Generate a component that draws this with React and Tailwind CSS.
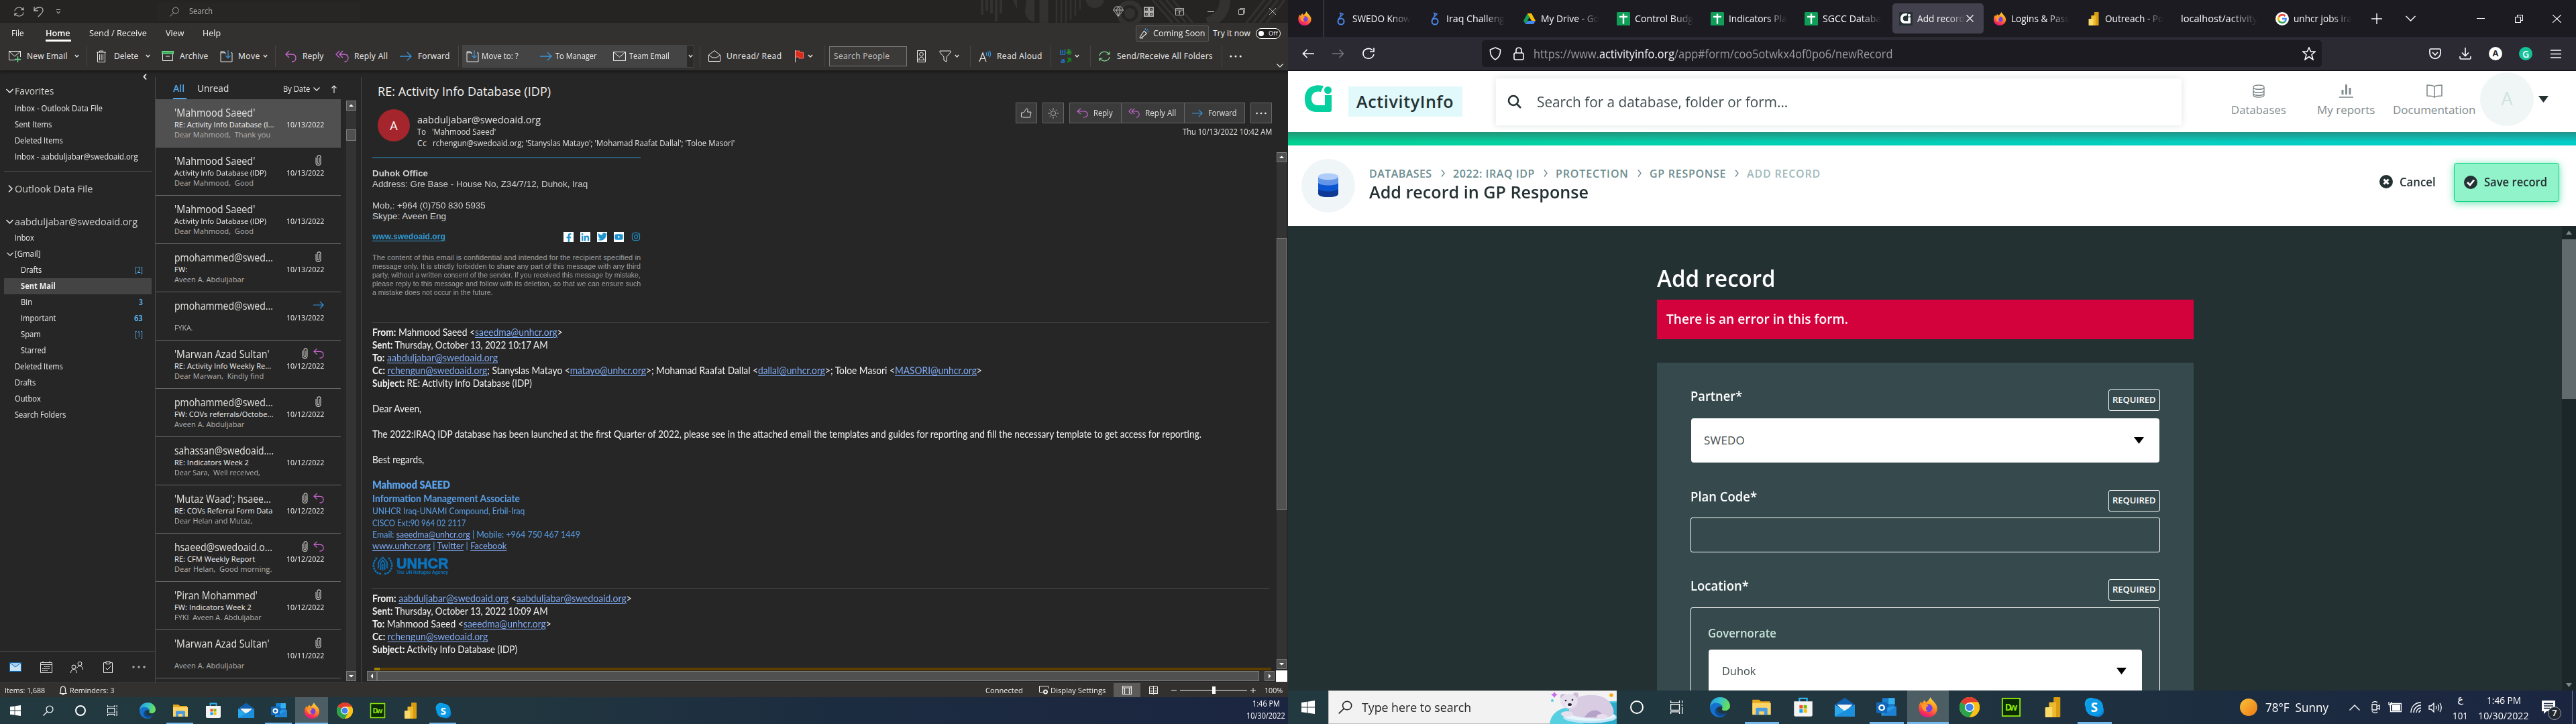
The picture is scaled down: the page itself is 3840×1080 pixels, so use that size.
import React, { useLayoutEffect, useRef, useState } from "react";
import { FaFacebookF, FaLinkedinIn, FaTwitter, FaInstagram, FaYoutube } from "react-icons/fa";

/* One line of text that fills its box: condensed when too wide, tracked out when too narrow. */
function T({ className = "", children }) {
  const box = useRef(null);
  const ink = useRef(null);
  const [fit, setFit] = useState({ spacing: 0, scale: 1 });
  useLayoutEffect(() => {
    const n = ink.current.textContent.length;
    const natural = ink.current.offsetWidth;
    const room = box.current.offsetWidth;
    if (n === 0 || natural === 0) return;
    if (natural > room) setFit({ spacing: 0, scale: room / natural });
    else setFit({ spacing: (room - natural) / n, scale: 1 });
  }, []);
  return (
    <div ref={box} className={"shrink-0 whitespace-pre " + className}>
      <span ref={ink} className="inline-block origin-left align-top" style={{ letterSpacing: fit.spacing + "px", transform: "scaleX(" + fit.scale + ")" }}>{children}</span>
    </div>
  );
}

/* Line icon on a 16 or 20 unit grid. */
function Ic({ className = "", box = "0 0 16 16", sw = 1, d, children }) {
  return (
    <svg viewBox={box} preserveAspectRatio="none" className={"shrink-0 " + className} fill="none" stroke="currentColor" strokeWidth={sw}>
      {d ? <path d={d} /> : null}
      {children}
    </svg>
  );
}

const Chev = ({ className = "" }) => <Ic className={"h-[5px] " + className} box="0 0 8 5" sw={1.4} d="M1 1L4 4L7 1" />;
const Sep = ({ className = "" }) => <div className={"h-8 w-px shrink-0 bg-[#484644] " + className} />;
const ReplyIc = ({ className = "" }) => <Ic className={"text-[#c767cf] " + className} box="0 0 17 18" sw={1.3} d="M6 1L1 6L6 11M1 6H10C14 6 16 8.500 16 11.500C16 15 13.500 17 10 17" />;
const ReplyAllIc = ({ className = "" }) => <Ic className={"text-[#c767cf] " + className} box="0 0 20 18" sw={1.3} d="M6 1L1 6L6 11M11 1L6 6L11 11M6 6H13C17 6 19 8.500 19 11.500C19 15 16.500 17 13.500 17" />;
const FwdIc = ({ className = "" }) => <Ic className={"text-[#3a96dd] " + className} box="0 0 18 14" sw={1.3} d="M0 7H17M11 1L17 7L11 13" />;
const MoveIc = ({ className = "" }) => (
  <Ic className={className} box="0 0 19 19">
    <path d="M8 4H1V18H18V4H16M1 4V2H6L8 4M8 4V6" />
    <path d="M12 0V12M8.500 8.500L12 12L15.500 8.500" stroke="#3a96dd" strokeWidth="1.300" />
  </Ic>
);
const ClipIc = ({ className = "" }) => <Ic className={className} box="0 0 9 16" sw={1.1} d="M1 4V12C1 16.500 8 16.500 8 12V3.500C8 0 3 0 3 3.500V11C3 13.500 6 13.500 6 11V4" />;
const SyncIc = ({ className = "" }) => <Ic className={className} box="0 0 18 18" sw={1.2} d="M2 8C2.500 3 9 0 14 4L16 6M16 2V6H12M16 10C15.500 15 9 18 4 14L2 12M2 16V12H6" />;
const SearchIc = ({ className = "", sw = 1.2 }) => (
  <Ic className={className} sw={sw}><circle cx="10" cy="6" r="5" /><path d="M6.500 9.500L0.500 15.500" /></Ic>
);
const Dots = ({ className = "" }) => (
  <svg viewBox="0 0 20 4" className={"shrink-0 " + className} fill="currentColor"><circle cx="2" cy="2" r="1.700" /><circle cx="10" cy="2" r="1.700" /><circle cx="18" cy="2" r="1.700" /></svg>
);

/* ------------------------------------------------ brand icons */
const Firefox = ({ className = "" }) => (
  <svg viewBox="0 0 24 24" className={className}>
    <defs><linearGradient id="ff" x1="0.700" y1="0" x2="0.300" y2="1"><stop offset="0" stopColor="#ffe13a" /><stop offset="0.450" stopColor="#ff8a1c" /><stop offset="0.850" stopColor="#f5265f" /><stop offset="1" stopColor="#d8169a" /></linearGradient></defs>
    <path d="M12 24C5 24 1 19 1 13C1 10 2 7 4 5C4 6 4.500 7 5 7.500C6 5 7.500 4 8.500 3.500C8.500 4.500 9 5.500 10 6C12.500 4.500 13.500 2.500 15 0C16 3 18 4 20 6.500C22 8.500 23 11 23 13.500C23 19.500 18 24 12 24Z" fill="url(#ff)" />
    <circle cx="12.500" cy="13" r="4.800" fill="#7542e5" />
    <path d="M4.500 8C7.500 7 11 8 12.500 10.500C9 11 8.500 15 12 16.500C8 18 4 15 4.500 8Z" fill="#ff9a2a" />
  </svg>
);
const Edge = ({ className = "" }) => (
  <svg viewBox="0 0 24 24" className={className}>
    <defs><linearGradient id="eg" x1="0" y1="0" x2="1" y2="0.300"><stop offset="0" stopColor="#2596e8" /><stop offset="0.500" stopColor="#35c1d0" /><stop offset="1" stopColor="#66e05c" /></linearGradient></defs>
    <path d="M0 12C0 5 5 0 12 0C19 0 24 5 24 10.500C24 14 21 16 18 16C15 16 14 15 14.500 13.500C16 11 13 7.500 9 8C4 8.500 0 13 0 12Z" fill="url(#eg)" />
    <path d="M0 12C1 8 5 6 9 7C13 7.500 14.500 10 14 12.500C13 10 9 11 8.500 14C8 19 13 21.500 19 20C17 23 14.500 24 12 24C5 24 0 19 0 12Z" fill="#1572cc" />
    <path d="M8.500 14C8 19 13 21.500 20.500 18.500C17 24 10 24 7 20C5 17 6 13 9.500 11.500Z" fill="#0c4a96" />
  </svg>
);
const Explorer = ({ className = "" }) => (
  <svg viewBox="0 0 24 24" className={className}><path d="M1 3H9L11 5H22V20H1Z" fill="#e8a81c" /><path d="M1 7H23V21H1Z" fill="#fdd467" /><path d="M5 21V14Q5 12.500 6.500 12.500H17.500Q19 12.500 19 14V21H15V17H9V21Z" fill="#4a9be0" /></svg>
);
const Store = ({ className = "" }) => (
  <svg viewBox="0 0 24 24" className={className}><path d="M7.500 7V1.500H16.500V7" fill="none" stroke="#30b4f0" strokeWidth="1.800" /><path d="M1 5H23V21Q23 23 21 23H3Q1 23 1 21Z" fill="#f3f3f3" /><path d="M7.500 9.500H11.500V13.500H7.500Z" fill="#f04e23" /><path d="M12.500 9.500H16.500V13.500H12.500Z" fill="#7fba00" /><path d="M7.500 14.500H11.500V18.500H7.500Z" fill="#00a4ef" /><path d="M12.500 14.500H16.500V18.500H12.500Z" fill="#ffb900" /></svg>
);
const MailApp = ({ className = "" }) => (
  <svg viewBox="0 0 24 24" className={className}><path d="M0 9L12 0.500L24 9V12H0Z" fill="#1060b0" /><path d="M3 9H21L12 18Z" fill="#f2f2f2" /><path d="M0 9L12 16L24 9V23H0Z" fill="#2aa8ea" /><path d="M3 9H21L12 16.500Z" fill="#f4f4f4" /><path d="M0 23L24 9V23Z" fill="#1c8fdc" /></svg>
);
const Outlook = ({ className = "" }) => (
  <svg viewBox="0 0 24 24" className={className}><path d="M7 1H22V15H7Z" fill="#1b7fd0" /><path d="M14.500 1H22V8H14.500Z" fill="#35b0ee" /><path d="M7 8H14.500V15H7Z" fill="#0f5ba8" /><path d="M6 13L24 11V22H6Z" fill="#2a9be6" /><path d="M24 11L6 22H24Z" fill="#1d82d4" /><rect x="0" y="6" width="13" height="13" rx="1" fill="#1066b8" /><circle cx="6.500" cy="12.500" r="3" fill="none" stroke="#fff" strokeWidth="1.900" /></svg>
);
const Chrome = ({ className = "" }) => (
  <svg viewBox="0 0 24 24" className={className}><circle cx="12" cy="12" r="12" fill="#fbc116" /><path d="M12 12L1.600 6A12 12 0 0 1 22.400 6H12Z" fill="#e33b2e" /><path d="M1.600 6A12 12 0 0 0 12 24L17.200 15L12 12Z" fill="#2ba24c" /><path d="M12 6H22.400A12 12 0 0 1 12 24L17.200 15Z" fill="#fbc116" /><circle cx="12" cy="12" r="5.700" fill="#fff" /><circle cx="12" cy="12" r="4.500" fill="#3f82ee" /></svg>
);
const Dw = ({ className = "" }) => (
  <svg viewBox="0 0 24 24" className={className}><rect x="1.500" y="1.500" width="21" height="21" fill="#0b2b05" stroke="#8ee80a" strokeWidth="1.500" /><text x="12" y="16" textAnchor="middle" fontFamily="Open Sans, sans-serif" fontWeight="700" fontSize="11" textLength="15" fill="#8ee80a">Dw</text></svg>
);
const PowerBI = ({ className = "" }) => (
  <svg viewBox="0 0 24 24" className={className}><rect x="13" y="0" width="8" height="24" rx="1" fill="#d99b0f" /><rect x="7.500" y="6" width="8.500" height="18" rx="1" fill="#edb92e" /><rect x="3" y="12" width="8.500" height="12" rx="1" fill="#fadb6a" /></svg>
);
const Skype = ({ className = "" }) => (
  <svg viewBox="0 0 24 24" className={className}><circle cx="8" cy="8" r="7.500" fill="#0fa5ea" /><circle cx="16" cy="16" r="7.500" fill="#0a84d6" /><circle cx="12" cy="12" r="10.500" fill="#0c9be6" /><text x="12" y="17.500" textAnchor="middle" fontFamily="Open Sans, sans-serif" fontWeight="700" fontSize="15" fill="#fff">S</text></svg>
);
const APPS = [
  { I: Edge }, { I: Explorer, on: true }, { I: Store }, { I: MailApp }, { I: Outlook, on: true },
  { I: Firefox, focus: true }, { I: Chrome }, { I: Dw }, { I: PowerBI }, { I: Skype, on: true },
];
const WinIc = ({ className = "" }) => (
  <svg viewBox="0 0 16 16" className={"shrink-0 " + className} fill="#fff"><path d="M0 2.300L6.600 1.400V7.600H0ZM7.400 1.300L16 0V7.600H7.400ZM0 8.400H6.600V14.600L0 13.700ZM7.400 8.400H16V16L7.400 14.700Z" /></svg>
);
const TaskViewIc = ({ className = "" }) => (
  <Ic className={"text-white " + className} box="0 0 17 16" sw={1.1} d="M0.500 0V2.500H11.500V0M0.500 4.500H11.500V11.500H0.500ZM0.500 16V13.500H11.500V16M15 0V3M15 8V16M14 5.500H16" />
);

/* ------------------------------------------------ Outlook: chrome */
function TitleBar() {
  return (
    <div className="relative flex h-[34px] items-center bg-[#252423] text-[#b8b6b4]">
      <svg viewBox="0 0 460 34" className="absolute right-0 top-0 h-[34px] w-[460px]" fill="none" stroke="#333231">
        <path d="M4 0V22M11 0V16M18 0V20M25 0V32M32 0V20" strokeWidth="4" />
        <path d="M50 0L56 14V0Z" fill="#333231" stroke="none" />
        <path d="M70 0H82V34C74 30 68 26 68 16Z" fill="#333231" stroke="none" />
        <path d="M96 0V34" strokeWidth="13" />
        <path d="M115 0V34M122 0V34M129 0V34M136 0V30M143 0V24M150 0V14" strokeWidth="2.500" />
        <circle cx="172" cy="-2" r="14" fill="#333231" stroke="none" />
        <circle cx="224" cy="20" r="8" fill="#333231" stroke="none" />
        <circle cx="224" cy="20" r="16" strokeWidth="7" />
        <path d="M258 0L288 34M268 0L298 34M278 0L308 34M288 0L318 34" strokeWidth="3" />
        <path d="M366 0C366 18 356 28 340 34" strokeWidth="16" />
        <path d="M398 34L425 0M408 34L435 0M418 34L445 0M428 34L455 0" strokeWidth="3" />
      </svg>
      <SyncIc className="ml-5 h-[17px] w-[17px]" />
      <Ic className="ml-[13px] h-[17px] w-[15px]" box="0 0 15 17" sw={1.3} d="M1 1V7H7M1 7C4 1 13 0 14 6C14.500 10 9 13 7 16" />
      <Ic className="ml-[18px] h-[7px] w-2" box="0 0 8 7" sw={1.1} d="M1 0.500H7M1.500 3L4 6L6.500 3" />
      <div className="ml-[143px] flex h-[27px] w-[303px] shrink-0 items-center bg-[#272625]">
        <SearchIc className="ml-[19px] h-[15px] w-[14px]" sw={1} />
        <T className="ml-[15px] w-[35px] text-[12px]">Search</T>
      </div>
      <Ic className="relative ml-[1122px] h-4 w-4" d="M4 1H12L15.500 6L8 15.500L0.500 6ZM0.500 6H15.500M8 1L5 6L8 15L11 6L8 1" />
      <Ic className="relative ml-[30px] h-[15px] w-[15px]" sw={1.8} box="0 0 16 16" d="M1 1H7V7H1ZM9 1H15V7H9ZM1 9H7V15H1ZM9 9H15V15H9ZM3 4H5M11 4H13M3 12H5M11 12H13" />
      <Ic className="relative ml-8 h-[11px] w-[13px]" box="0 0 13 11" d="M0.500 0.500H12.500V10.500H0.500ZM0.500 3H12.500M6.500 9.500V4.500M4.500 6.500L6.500 4.500L8.500 6.500" />
      <div className="relative ml-[35px] h-px w-[10px] bg-[#c8c6c4]" />
      <Ic className="relative ml-9 h-[10px] w-[10px]" box="0 0 10 10" d="M0.500 2.500H7.500V9.500H0.500ZM2.500 2.500V0.500H9.500V7.500H7.500" />
      <Ic className="relative ml-9 h-[10px] w-[10px]" box="0 0 10 10" d="M0 0L10 10M10 0L0 10" />
    </div>
  );
}

function MenuTabs() {
  return (
    <div className="flex h-[31px] items-center text-[13px] text-[#f3f2f1]">
      <T className="ml-[17px] w-[19px]">File</T>
      <div className="relative ml-8 flex h-full items-center font-semibold text-white">
        <T className="w-[37px]">Home</T>
        <div className="absolute bottom-[3px] left-0 h-[3px] w-[38px] bg-white" />
      </div>
      <T className="ml-7 w-[86px]">Send / Receive</T>
      <T className="ml-7 w-[27px]">View</T>
      <T className="ml-7 w-[27px]">Help</T>
      <div className="ml-[1364px] flex h-6 w-[109px] shrink-0 items-center rounded-xs border border-[#5a5856] bg-[#3b3a39]">
        <Ic className="ml-1 h-4 w-[15px]" sw={1.1}>
          <path d="M1 14L8 4L12 8L3 15ZM5 14V16" />
          <path d="M10 3V0M12 4L14 1M13 6L16 5" stroke="#3a96dd" />
        </Ic>
        <T className="ml-[6px] w-[77px]">Coming Soon</T>
      </div>
      <T className="ml-[6px] w-14 text-[12px]">Try it now</T>
      <div className="ml-2 flex h-4 w-[37px] shrink-0 items-center rounded-full border border-white bg-[#201f1e] text-[9px] text-white">
        <div className="ml-[3px] h-2 w-2 rounded-full bg-white" />
        <T className="ml-[7px] w-[14px]">Off</T>
      </div>
    </div>
  );
}

function Ribbon() {
  return (
    <div className="flex h-[37px] items-center text-[12px] text-[#f0efee]">
      <Ic className="ml-[13px] h-[18px] w-[18px]" box="0 0 18 18">
        <path d="M10 14.500H0.500V1.500H17.500V10M0.500 1.500L9 9L17.500 1.500" />
        <path d="M13.500 9V18M9 13.500H18" stroke="#6fdc8c" strokeWidth="1.400" />
      </Ic>
      <T className="ml-[9px] w-[61px]">New Email</T>
      <Chev className="ml-[10px] w-[7px]" />
      <Sep className="ml-[11px]" />
      <Ic className="ml-[14px] h-[18px] w-[14px]" box="0 0 14 18" d="M0 3H14M4.500 3V1H9.500V3M1.500 3V17.500H12.500V3M4.500 6V15M7 6V15M9.500 6V15" />
      <T className="ml-3 w-9">Delete</T>
      <Chev className="ml-[11px] w-[7px]" />
      <Ic className="ml-[17px] h-[15px] w-[18px]" box="0 0 18 15">
        <path d="M1.500 4V14.500H16.500V4M6 8H12" />
        <rect x="0.500" y="0.500" width="17" height="3.500" fill="#3fae5a" stroke="#6fdc8c" />
      </Ic>
      <T className="ml-[9px] w-[42px]">Archive</T>
      <MoveIc className="ml-[18px] h-[18px] w-[19px]" />
      <T className="ml-2 w-[33px]">Move</T>
      <Chev className="ml-1 w-[7px]" />
      <Sep className="ml-[11px]" />
      <ReplyIc className="ml-[14px] h-[18px] w-[17px]" />
      <T className="ml-[9px] w-8">Reply</T>
      <ReplyAllIc className="ml-[17px] h-[18px] w-5" />
      <T className="ml-2 w-[50px]">Reply All</T>
      <FwdIc className="ml-[18px] h-[14px] w-[18px]" />
      <T className="ml-[9px] w-12">Forward</T>
      <Sep className="ml-3" />
      <div className="ml-[5px] flex h-[34px] w-[334px] shrink-0 items-center bg-[#444444]">
        <MoveIc className="ml-[6px] h-[18px] w-[19px]" />
        <T className="ml-1 w-[55px]">Move to: ?</T>
        <FwdIc className="ml-8 h-[14px] w-[18px]" />
        <T className="ml-[5px] w-[62px]">To Manager</T>
        <Ic className="ml-6 h-[14px] w-[19px]" box="0 0 19 14" d="M0.500 0.500H18.500V13.500H0.500ZM0.500 0.500L9.500 8L18.500 0.500" />
        <T className="ml-[5px] w-[60px]">Team Email</T>
      </div>
      <div className="flex h-[34px] w-3 shrink-0 items-center justify-center border border-[#444444] bg-[#2b2a29]"><Chev className="w-[7px]" /></div>
      <Sep className="ml-2" />
      <Ic className="ml-3 h-[17px] w-[18px]" box="0 0 18 17" d="M0.500 7V16.500H17.500V7L9 0.500ZM0.500 7L6 11H12L17.500 7" />
      <T className="ml-[9px] w-[82px]">Unread/ Read</T>
      <svg viewBox="0 0 13 18" className="ml-5 h-[18px] w-[13px] shrink-0"><path d="M0.500 0V18" stroke="#d8d6d4" /><path d="M1 1H7V3H12.500V12H6V10H1Z" fill="#d92b1c" stroke="#ff6a5c" /></svg>
      <Chev className="ml-[6px] w-2" />
      <Sep className="ml-4" />
      <div className="ml-[7px] flex h-[30px] w-[116px] shrink-0 items-center border border-[#7d7b79] bg-[#3b3a39] text-[#c8c6c4]">
        <T className="ml-[6px] w-[83px]">Search People</T>
      </div>
      <Ic className="ml-[15px] h-[18px] w-[13px]" box="0 0 13 18"><path d="M0.500 0.500H12.500V14.500H0.500ZM0.500 14.500V17.500H12.500V14.500M3 14C3 9 10 9 10 14" /><circle cx="6.500" cy="6" r="2.800" /></Ic>
      <Ic className="ml-5 h-[18px] w-[18px]" box="0 0 18 18" d="M1 1H17V3L11 10V17L7 15V10L1 3Z" />
      <Chev className="ml-[5px] w-[7px]" />
      <Sep className="ml-4" />
      <Ic className="ml-3 h-[18px] w-[18px]" box="0 0 18 18" sw={1.2}><path d="M1 17L6 4L11 17M3 12.500H9" /><path d="M11 3C12 5 12 6 11 8M13.500 2C15 4.500 15 7 13.500 9M16 0.500C18 4 18 7.500 16 10.500" stroke="#3a96dd" /></Ic>
      <T className="ml-[9px] w-[68px]">Read Aloud</T>
      <Sep className="ml-3" />
      <div className="ml-[13px] grid h-[24px] w-[18px] shrink-0 grid-cols-2 grid-rows-2 items-center justify-items-center text-[11px] font-bold leading-[12px]">
        <svg viewBox="0 0 9 9" className="h-[9px] w-[9px]"><path d="M1 1V8H8M4 2V6M7.500 1V7" stroke="#1e78d0" strokeWidth="1.600" fill="none" /></svg>
        <span className="font-['Noto_Sans_CJK_JP',sans-serif] text-[9px] text-[#23a02a]">あ</span>
        <span className="text-[#1e78d0]">a</span>
        <svg viewBox="0 0 9 9" className="h-[9px] w-[9px]"><path d="M1 1H8V8L5.500 6L2 9V6L4 4Z" fill="#17801c" /></svg>
      </div>
      <Chev className="ml-1 w-[7px]" />
      <Sep className="ml-4" />
      <SyncIc className="ml-[11px] h-[18px] w-[19px] text-[#7fd892]" />
      <T className="ml-[9px] w-[143px]">Send/Receive All Folders</T>
      <Sep className="ml-[13px]" />
      <Dots className="ml-[11px] h-[4px] w-[18px]" />
      <Ic className="mb-[1px] ml-[52px] h-[6px] w-[10px] self-end" box="0 0 10 6" sw={1.2} d="M0.500 0.500L5 5L9.500 0.500" />
    </div>
  );
}

/* ------------------------------------------------ Outlook: folders */
const FAVORITES = [
  ["Inbox - Outlook Data File", "w-[131px]"],
  ["Sent Items", "w-[55px]"],
  ["Deleted Items", "w-[72px]"],
  ["Inbox - aabduljabar@swedoaid.org", "w-[184px]"],
];
const GMAIL = [
  ["Drafts", "w-[31px]", "[2]", "w-[12px]"],
  ["Sent Mail", "w-[52px]"],
  ["Bin", "w-[17px]", "3", "w-[6px] font-bold"],
  ["Important", "w-[53px]", "63", "w-[13px] font-bold"],
  ["Spam", "w-[30px]", "[1]", "w-[12px]"],
  ["Starred", "w-[37px]"],
];
const REST = [["Deleted Items", "w-[72px]"], ["Drafts", "w-[31px]"], ["Outbox", "w-[39px]"], ["Search Folders", "w-[76px]"]];
const FOLDER_ROW = "flex h-6 items-center";

function Folders() {
  return (
    <div className="flex w-[231px] shrink-0 flex-col text-[12px] text-[#f0efee]">
      <div className="flex h-[18px] items-center justify-end pr-3"><Ic className="mt-[1px] h-[9px] w-[6px]" box="0 0 6 9" sw={1.8} d="M5 0.500L1.500 4.500L5 8.500" /></div>
      <div className={FOLDER_ROW}>
        <Ic className="ml-[9px] h-[7px] w-[11px]" box="0 0 11 7" sw={1.5} d="M0.500 1L5.500 6L10.500 1" />
        <T className="ml-[2px] w-[58px] text-[15px] text-[#d6d4d2]">Favorites</T>
      </div>
      <div className="mt-[3px] pl-[22px]">
        {FAVORITES.map(([t, w]) => <div key={t} className={FOLDER_ROW}><T className={w}>{t}</T></div>)}
      </div>
      <div className="ml-[6px] mt-[9px] h-px w-[220px] bg-[#4a4a4a]" />
      <div className="mt-[12px] flex h-[26px] items-center">
        <Ic className="ml-[12px] h-[11px] w-[7px]" box="0 0 7 11" sw={1.5} d="M1 0.500L6 5.500L1 10.500" />
        <T className="ml-[3px] w-[116px] text-[15px] text-[#d6d4d2]">Outlook Data File</T>
      </div>
      <div className="mt-6 flex h-[25px] items-center">
        <Ic className="ml-[9px] h-[7px] w-[11px]" box="0 0 11 7" sw={1.5} d="M0.500 1L5.500 6L10.500 1" />
        <T className="ml-[2px] w-[183px] text-[15px] text-[#d6d4d2]">aabduljabar@swedoaid.org</T>
      </div>
      <div className={FOLDER_ROW}><T className="ml-[22px] w-[29px]">Inbox</T></div>
      <div className={FOLDER_ROW}>
        <Ic className="ml-[10px] h-[6px] w-[10px]" box="0 0 11 7" sw={1.5} d="M0.500 1L5.500 6L10.500 1" />
        <T className="ml-[2px] w-[38px]">[Gmail]</T>
      </div>
      {GMAIL.map(([t, w, n, nw]) => (
        <div key={t} className={"ml-[6px] flex h-6 w-[220px] items-center justify-between pl-[25px] pr-[13px] " + (t === "Sent Mail" ? "bg-[#444444] font-bold" : "")}>
          <T className={w}>{t}</T>
          {n ? <T className={"text-[#57aef0] " + nw}>{n}</T> : null}
        </div>
      ))}
      <div className="flex-1 pl-[22px]">
        {REST.map(([t, w]) => <div key={t} className={FOLDER_ROW}><T className={w}>{t}</T></div>)}
      </div>
      <div className="flex h-[47px] items-center border-t border-[#4a4a4a]">
        <svg viewBox="0 0 18 14" className="ml-[14px] h-[14px] w-[18px]"><rect x="0.500" y="0.500" width="17" height="13" fill="#c7e0f4" stroke="#0a6cc0" /><path d="M1 1L9 7L17 1" fill="#a8cdec" stroke="#0a6cc0" /></svg>
        <Ic className="ml-[28px] h-[18px] w-[18px]" box="0 0 18 18" d="M0.500 2.500H17.500V17.500H0.500ZM0.500 5.500H17.500M4 0.500V2.500M14 0.500V2.500M3 14.500H5M6 14.500H8M9 14.500H11M3 11.500H5M6 11.500H8M9 11.500H11M12 11.500H14M6 8.500H8M9 8.500H11M12 8.500H14" />
        <Ic className="ml-[27px] h-[18px] w-[19px]" box="0 0 19 18"><circle cx="5" cy="9" r="3" /><circle cx="14" cy="4" r="3" /><path d="M0.500 18C0.500 10.500 9.500 10.500 9.500 18M9.500 11C11 6 18.500 6 18.500 13" /></Ic>
        <Ic className="ml-[30px] h-[18px] w-[14px]" box="0 0 14 18" d="M4 2.500H0.500V17.500H13.500V2.500H10M4 1H10V4.500H4ZM3.500 10.500L6 13L11 8" />
        <Dots className="ml-[29px] h-[4px] w-5 text-[#b0aeac]" />
      </div>
    </div>
  );
}

/* ------------------------------------------------ Outlook: messages */
const MESSAGES = [
  ["'Mahmood Saeed'", "w-[120px]", "RE: Activity Info Database (I...", "w-[148px]", "Dear Mahmood,  Thank you", "w-[143px]", "10/13/2022", ""],
  ["'Mahmood Saeed'", "w-[120px]", "Activity Info Database (IDP)", "w-[137px]", "Dear Mahmood,  Good", "w-[118px]", "10/13/2022", "c"],
  ["'Mahmood Saeed'", "w-[120px]", "Activity Info Database (IDP)", "w-[137px]", "Dear Mahmood,  Good", "w-[118px]", "10/13/2022", ""],
  ["pmohammed@swed...", "w-[147px]", "FW:", "w-[20px]", "Aveen A. Abduljabar", "w-[104px]", "10/13/2022", "c"],
  ["pmohammed@swed...", "w-[147px]", "", "w-[20px]", "FYKA.", "w-[27px]", "10/13/2022", "f"],
  ["'Marwan Azad Sultan'", "w-[142px]", "RE: Activity Info Weekly Re...", "w-[144px]", "Dear Marwan,  Kindly find", "w-[133px]", "10/12/2022", "cr"],
  ["pmohammed@swed...", "w-[147px]", "FW: COVs referrals/Octobe...", "w-[147px]", "Aveen A. Abduljabar", "w-[104px]", "10/12/2022", "c"],
  ["sahassan@swedoaid....", "w-[148px]", "RE: Indicators Week 2", "w-[111px]", "Dear Sara,  Well received,", "w-[128px]", "10/12/2022", ""],
  ["'Mutaz Waad'; hsaee...", "w-[144px]", "RE: COVs Referral Form Data", "w-[146px]", "Dear Helan and Mutaz,", "w-[117px]", "10/12/2022", "cr"],
  ["hsaeed@swedoaid.o...", "w-[146px]", "RE: CFM Weekly Report", "w-[120px]", "Dear Helan,  Good morning.", "w-[145px]", "10/12/2022", "cr"],
  ["'Piran Mohammed'", "w-[124px]", "FW: Indicators Week 2", "w-[115px]", "FYKI  Aveen A. Abduljabar", "w-[130px]", "10/12/2022", "c"],
  ["'Marwan Azad Sultan'", "w-[142px]", "", "w-[20px]", "Aveen A. Abduljabar", "w-[104px]", "10/11/2022", "c"],
];

const ScrollBtn = ({ d, className = "" }) => (
  <div className={"flex h-[15px] w-[15px] shrink-0 items-center justify-center border border-[#7a7a7a] bg-[#505050] " + className}>
    <svg viewBox="0 0 7 7" className="h-[7px] w-[7px]" fill="#fff"><path d={d} /></svg>
  </div>
);
const UP = "M0 5L3.500 1.500L7 5Z";
const DOWN = "M0 2L3.500 5.500L7 2Z";

function MessageList() {
  return (
    <div className="flex w-[306px] shrink-0 flex-col">
      <div className="relative flex h-[43px] items-center pt-[9px] text-[#e6e4e2]">
        <T className="ml-[26px] w-[17px] text-[15px] font-semibold text-[#4ea6ea]">All</T>
        <T className="ml-[19px] w-[47px] text-[15px]">Unread</T>
        <T className="ml-[81px] mt-[4px] w-10 text-[12px]">By Date</T>
        <Ic className="ml-[5px] mt-[4px] h-[6px] w-[10px]" box="0 0 10 6" sw={1.4} d="M0.500 0.500L5 5L9.500 0.500" />
        <Ic className="ml-[17px] mt-[3px] h-3 w-2" box="0 0 8 12" sw={1.2} d="M4 12V1M0.500 4.500L4 1L7.500 4.500" />
        <div className="absolute bottom-0 left-[26px] h-[2px] w-5 bg-[#4ea6ea]" />
      </div>
      <div className="flex">
        <div className="w-[276px]">
          {MESSAGES.map(([from, fw, sub, sw, pre, pw, date, marks], i) => (
            <div key={i} className={"flex h-[72px] justify-between border-b border-[#666666] pl-7 pr-[25px] pt-[11px] text-[11px] " + (i === 0 ? "bg-[#505050]" : "")}>
              <div>
                <div className="h-[19px] text-[15.500px] leading-[19px] text-[#e6e4e2]"><T className={fw}>{from}</T></div>
                <div className="h-[15px] leading-[15px] text-[#f3f2f1]"><T className={sw}>{sub}</T></div>
                <div className="h-[15px] leading-[15px] text-[#b4b2b0]"><T className={pw}>{pre}</T></div>
              </div>
              <div className="flex flex-col items-end">
                <div className="flex h-[19px] items-start">
                  {marks.includes("c") ? <ClipIc className={"h-4 w-[9px] text-[#c8c6c4] " + (marks === "c" ? "mr-1" : "mr-2")} /> : null}
                  {marks.includes("r") ? <ReplyIc className="h-4 w-4" /> : null}
                  {marks === "f" ? <FwdIc className="mt-[2px] h-3 w-4" /> : null}
                </div>
                <div className="h-[15px] leading-[15px] text-[#f3f2f1]"><T className="w-14">{date}</T></div>
              </div>
            </div>
          ))}
        </div>
        <div className="ml-2 mt-[2px] flex h-[866px] w-[15px] flex-col bg-[#333333]">
          <ScrollBtn d={UP} />
          <div className="mt-7 h-[17px] border border-[#7a7a7a] bg-[#505050]" />
          <ScrollBtn d={DOWN} className="mt-auto" />
        </div>
      </div>
    </div>
  );
}

/* ------------------------------------------------ Outlook: reading pane */
const L = ({ children }) => <span className="text-[#7fabf5] underline underline-offset-2">{children}</span>;
const B = ({ children }) => <b className="font-bold">{children}</b>;
const DISCLAIMER = [
  ["The content of this email is confidential and intended for the recipient specified in", "w-[400px]"],
  ["message only. It is strictly forbidden to share any part of this message with any third", "w-[400px]"],
  ["party, without a written consent of the sender. If you received this message by mistake,", "w-[400px]"],
  ["please reply to this message and follow with its deletion, so that we can ensure such", "w-[400px]"],
  ["a mistake does not occur in the future.", "w-[180px]"],
];
const HBTN = "flex h-[31px] items-center border border-[#666666] bg-[#3b3b3b]";

function ReadingPane() {
  return (
    <div className="flex flex-1 flex-col">
      <div className="ml-6 mt-[19px] flex h-6 items-center text-[18px] text-[#f0efee]"><T className="w-[258px]">RE: Activity Info Database (IDP)</T></div>
      <div className="flex h-[79px] text-[12px] text-[#e6e4e2]">
        <div className="ml-6 mt-[15px] flex h-12 w-12 items-center justify-center rounded-full bg-[#a4262c] text-[18px] text-white">A</div>
        <div className="ml-[11px] mt-5">
          <div className="h-5 text-[15px] leading-5"><T className="w-[184px]">aabduljabar@swedoaid.org</T></div>
          <div className="flex h-[18px] leading-[18px]"><T className="w-[13px]">To</T><T className="ml-[9px] w-[95px]">'Mahmood Saeed'</T></div>
          <div className="flex h-4 leading-4"><T className="w-[14px]">Cc</T><T className="ml-[9px] w-[450px]">rchengun@swedoaid.org; 'Stanyslas Matayo'; 'Mohamad Raafat Dallal'; 'Toloe Masori'</T></div>
        </div>
        <div className="ml-auto mr-6 mt-[5px] flex flex-col items-end">
          <div className="flex">
            <div className={HBTN + " w-8 justify-center"}><Ic className="h-[15px] w-4" d="M0.500 7.500H4L8 1C10 0.500 10.500 2 9.500 6.500H15L13.500 15H4.500L0.500 14.500Z" /></div>
            <div className={HBTN + " ml-2 w-8 justify-center text-[#b0aeac]"}><Ic className="h-4 w-4"><circle cx="8" cy="8" r="3.500" /><path d="M8 0V3M8 13V16M0 8H3M13 8H16M2.500 2.500L4.500 4.500M11.500 11.500L13.500 13.500M13.500 2.500L11.500 4.500M2.500 13.500L4.500 11.500" /></Ic></div>
            <div className={HBTN + " ml-2 w-[78px]"}><ReplyIc className="ml-[10px] h-[15px] w-[17px]" /><T className="ml-2 w-[29px]">Reply</T></div>
            <div className={HBTN + " -ml-px w-[95px]"}><ReplyAllIc className="ml-[10px] h-[15px] w-[17px]" /><T className="ml-2 w-[46px]">Reply All</T></div>
            <div className={HBTN + " -ml-px w-[91px]"}><FwdIc className="ml-[11px] h-3 w-4" /><T className="ml-2 w-[43px]">Forward</T></div>
            <div className={HBTN + " ml-2 w-8 justify-center"}><Dots className="h-[4px] w-4" /></div>
          </div>
          <div className="mt-1 h-[18px] leading-[18px]"><T className="w-[133px]">Thu 10/13/2022 10:42 AM</T></div>
        </div>
      </div>
      <div className="flex h-[773px]">
        <div className="flex w-[1364px] shrink-0 flex-col pl-4 font-['Lato',sans-serif] text-[14.500px] leading-[19px] text-[#f3f3f3]">
          <div className="mt-2 h-px w-[400px] shrink-0 bg-[#2e9bd6]" />
          <div className="mt-[15px] font-['Liberation_Sans',sans-serif] text-[13.500px] leading-4 text-[#d2d2d2]">
            <T className="w-[83px] font-bold">Duhok Office</T>
            <T className="w-[321px]">Address: Gre Base - House No, Z34/7/12, Duhok, Iraq</T>
            <T className="mt-4 w-[169px]">Mob,: +964 (0)750 830 5935</T>
            <T className="w-[110px]">Skype: Aveen Eng</T>
          </div>
          <div className="mt-[14px] flex h-4 w-[400px] items-center font-['Liberation_Sans',sans-serif] text-[12.500px] font-bold text-[#2e9bd6]">
            <T className="w-[109px]"><span className="underline underline-offset-2">www.swedoaid.org</span></T>
            <div className="ml-auto flex gap-[10px] text-[#1f93cf]">
              <div className="flex h-[15px] w-[15px] items-end justify-center bg-white"><FaFacebookF className="h-[13px] w-3" /></div>
              <div className="flex h-[15px] w-[15px] items-end justify-center bg-white"><FaLinkedinIn className="h-[13px] w-[13px]" /></div>
              <div className="flex h-[15px] w-[15px] items-center justify-center bg-white"><FaTwitter className="h-[14px] w-[14px]" /></div>
              <div className="flex h-[15px] w-[15px] items-center justify-center bg-white"><FaYoutube className="h-[13px] w-[13px]" /></div>
              <div className="flex h-[15px] w-[15px] items-center justify-center"><FaInstagram className="h-[14px] w-[14px]" /></div>
            </div>
          </div>
          <div className="mt-[17px] font-['Liberation_Sans',sans-serif] text-[11px] leading-[13px] text-[#a0a0a0]">
            {DISCLAIMER.map(([t, w]) => <T key={t} className={w}>{t}</T>)}
          </div>
          <div className="mt-[38px] h-px w-[1337px] shrink-0 bg-[#484848]" />
          <div className="mt-[4px]">
            <T className="w-[284px]"><B>From:</B> Mahmood Saeed &lt;<L>saeedma@unhcr.org</L>&gt;</T>
            <T className="w-[262px]"><B>Sent:</B> Thursday, October 13, 2022 10:17 AM</T>
            <T className="w-[187px]"><B>To:</B> <L>aabduljabar@swedoaid.org</L></T>
            <T className="w-[909px]"><B>Cc:</B> <L>rchengun@swedoaid.org</L>; Stanyslas Matayo &lt;<L>matayo@unhcr.org</L>&gt;; Mohamad Raafat Dallal &lt;<L>dallal@unhcr.org</L>&gt;; Toloe Masori &lt;<L>MASORI@unhcr.org</L>&gt;</T>
            <T className="w-[238px]"><B>Subject:</B> RE: Activity Info Database (IDP)</T>
            <T className="mt-[19px] w-[73px]">Dear Aveen,</T>
            <T className="mt-[19px] w-[1236px]">The 2022:IRAQ IDP database has been launched at the first Quarter of 2022, please see in the attached email the templates and guides for reporting and fill the necessary template to get access for reporting.</T>
            <T className="mt-[19px] w-[77px]">Best regards,</T>
          </div>
          <div className="mt-[19px] text-[13px] leading-[17px] text-[#5aa0e8]">
            <T className="w-[116px] text-[16px] font-extrabold leading-[18px]">Mahmood SAEED</T>
            <T className="mt-[3px] w-[220px] text-[14.500px] font-bold leading-[18px]">Information Management Associate</T>
            <T className="mt-px w-[227px]">UNHCR Iraq-UNAMI Compound, Erbil-Iraq</T>
            <T className="mt-px w-[139px]">CISCO Ext:90 964 02 2117</T>
            <T className="w-[310px]">Email: <L>saeedma@unhcr.org</L> | Mobile: +964 750 467 1449</T>
            <T className="w-[200px]"><L>www.unhcr.org</L> | <L>Twitter</L> | <L>Facebook</L></T>
          </div>
          <div className="mt-[7px] flex h-7 text-[#0b74bd]">
            <Ic className="h-7 w-[31px]" box="0 0 31 28" sw={1.8}>
              <path d="M7 2C1 8 0 16 5 22C7 25 11 26 14 26M24 2C30 8 31 16 26 22C24 25 20 26 17 26" strokeWidth="2.600" strokeDasharray="3 1" />
              <path d="M15.500 1L9 9V18M15.500 1L22 9V18M12.500 20V10L15.500 6L18.500 10V20M15.500 11V21" />
            </Ic>
            <div className="ml-[5px] font-['Liberation_Sans',sans-serif] font-bold">
              <T className="mt-px w-[77px] text-[22px] leading-[19px] [-webkit-text-stroke:0.8px_#0b74bd]">UNHCR</T>
              <T className="w-[77px] text-[7.500px] leading-[8px]">The UN Refugee Agency</T>
            </div>
          </div>
          <div className="mt-[19px] h-px w-[1337px] shrink-0 bg-[#484848]" />
          <div className="mt-[5px]">
            <T className="w-[387px]"><B>From:</B> <L>aabduljabar@swedoaid.org</L> &lt;<L>aabduljabar@swedoaid.org</L>&gt;</T>
            <T className="w-[262px]"><B>Sent:</B> Thursday, October 13, 2022 10:09 AM</T>
            <T className="w-[267px]"><B>To:</B> Mahmood Saeed &lt;<L>saeedma@unhcr.org</L>&gt;</T>
            <T className="w-[172px]"><B>Cc:</B> <L>rchengun@swedoaid.org</L></T>
            <T className="w-[216px]"><B>Subject:</B> Activity Info Database (IDP)</T>
          </div>
          <div className="mt-auto flex h-1 shrink-0 pl-[3px]">
            <div className="w-[9px] bg-[#a08400]" />
            <div className="ml-px w-[1327px] bg-[#5f3f00]" />
          </div>
        </div>
        <div className="flex h-[771px] w-[15px] flex-col bg-[#333333]">
          <ScrollBtn d={UP} />
          <div className="mt-[113px] h-[406px] border border-[#7a7a7a] bg-[#505050]" />
          <ScrollBtn d={DOWN} className="mt-auto" />
        </div>
      </div>
      <div className="flex h-[18px]">
        <div className="ml-2 mt-px flex h-[15px] w-[1353px] bg-[#333333]">
          <ScrollBtn d="M5 0L1.500 3.500L5 7Z" />
          <div className="w-[1315px] border border-[#7a7a7a] bg-[#505050]" />
          <ScrollBtn d="M2 0L5.500 3.500L2 7Z" className="ml-auto" />
        </div>
        <div className="ml-[2px] h-[17px] w-[17px] bg-white" />
      </div>
    </div>
  );
}

function StatusBar() {
  return (
    <div className="flex h-[22px] items-center border-t border-[#3f3e3d] bg-[#323130] text-[11.500px] text-[#f0efee]">
      <T className="ml-[7px] w-[60px]">Items: 1,688</T>
      <Ic className="ml-[21px] h-[14px] w-3" box="0 0 12 14" sw={1.2} d="M1 11.500H11L9.500 9V5C9.500 -0.300 2.500 -0.300 2.500 5V9L1 11.500M4.500 12C4.500 14 7.500 14 7.500 12" />
      <T className="ml-1 w-[66px]">Reminders: 3</T>
      <T className="ml-[1299px] w-14">Connected</T>
      <Ic className="ml-6 h-[13px] w-[14px]" box="0 0 14 13"><path d="M6 9.500H0.500V0.500H13.500V4" /><circle cx="9.500" cy="9" r="2.500" strokeWidth="2" /></Ic>
      <T className="ml-[3px] w-[82px]">Display Settings</T>
      <div className="ml-3 flex h-full w-10 items-center justify-center bg-[#5d5b59]"><Ic className="h-[13px] w-[14px]" box="0 0 14 13" sw={1.2} d="M0.500 0.500H13.500V12.500H0.500ZM0.500 3H13.500M3.500 3V12M10.500 3V12" /></div>
      <Ic className="ml-[13px] h-[13px] w-[13px]" box="0 0 13 13" sw={1.1} d="M6.500 1.500H0.500V11.500H6.500M6.500 1.500H12.500V11.500H6.500M6.500 0V13M2 4H5M2 6.500H5M2 9H5M8 4H11M8 6.500H11M8 9H11" />
      <div className="ml-5 h-px w-2 bg-white" />
      <div className="ml-[5px] flex h-[11px] w-[100px] items-center">
        <div className="h-px w-12 bg-white" /><div className="h-[11px] w-[5px] bg-white" /><div className="h-px flex-1 bg-white" />
      </div>
      <Ic className="ml-[5px] h-2 w-2" box="0 0 8 8" d="M0 4H8M4 0V8" />
      <T className="ml-[13px] w-[27px]">100%</T>
    </div>
  );
}

function LeftTaskbar() {
  return (
    <div className="flex h-10 bg-[linear-gradient(90deg,#22393f_0%,#21363f_40%,#1c2c40_65%,#1b2540_100%)] text-white">
      <div className="flex w-[46px] items-center justify-center"><WinIc className="h-4 w-4" /></div>
      <div className="ml-[2px] flex w-12 items-center justify-center"><SearchIc className="h-4 w-4" /></div>
      <div className="flex w-12 items-center justify-center"><div className="h-4 w-4 rounded-full border-2 border-white" /></div>
      <div className="flex w-12 items-center justify-center"><TaskViewIc className="h-4 w-4" /></div>
      <div className="ml-[3px] flex">
        {APPS.map(({ I, on, focus }, i) => (
          <div key={i} className={"relative flex w-[49px] items-center justify-center " + (focus ? "bg-[#4d5d64]" : "")}>
            <I className="h-6 w-6" />
            {on ? <div className="absolute bottom-0 left-1 h-[2px] w-10 bg-[#76b9ed]" /> : null}
            {focus ? <div className="absolute bottom-0 left-0 h-[2px] w-[49px] bg-[#76b9ed]" /> : null}
          </div>
        ))}
      </div>
      <div className="ml-auto flex w-[60px] flex-col items-center pt-px text-[12px] leading-[18px]">
        <T className="w-[41px]">1:46 PM</T>
        <T className="w-[58px]">10/30/2022</T>
      </div>
      <div className="w-[3px]" />
    </div>
  );
}

function OutlookWindow() {
  return (
    <div className="flex h-[1080px] w-[1920px] shrink-0 flex-col overflow-hidden bg-[#262626] font-['Open_Sans',sans-serif]">
      <TitleBar />
      <div className="relative h-[71px] bg-[#323130] shadow-[0_2px_4px_rgba(0,0,0,0.45)]"><MenuTabs /><Ribbon /></div>
      <div className="flex h-[913px]">
        <Folders />
        <div className="mt-[10px] w-px bg-[#484848]" />
        <MessageList />
        <div className="mt-[10px] w-px bg-[#484848]" />
        <ReadingPane />
      </div>
      <StatusBar />
      <LeftTaskbar />
    </div>
  );
}

/* ------------------------------------------------ Browser */
const LoopFav = () => <Ic className="h-5 w-5 text-[#4a86e8]" box="0 0 20 20" sw={2}><circle cx="10" cy="14" r="4.500" /><path d="M6 11L10 5M9 1.500L13 3L10 6Z" strokeWidth="1.500" /></Ic>;
const SheetFav = () => <svg viewBox="0 0 20 20" className="h-5 w-5"><rect width="20" height="20" rx="1.500" fill="#0f9d58" /><path d="M10 2.500V17.500M4 7H16" stroke="#fff" strokeWidth="2.400" /></svg>;
const DriveFav = () => <svg viewBox="0 0 20 18" className="h-[18px] w-5"><path d="M7 1H13L10 6.500L4 17L1 12Z" fill="#12a155" /><path d="M7 1H13L19 12H13Z" fill="#fbbc04" /><path d="M4 17L7 12H19L16 17Z" fill="#4285f4" /></svg>;
const Ai = ({ className = "", color }) => (
  <svg viewBox="0 0 40 40" className={className}>
    <path d="M28 1C8 -3 0 8 0 20C0 34 6 40 18 40H37Q40 40 40 37V15H30V30H20C13 30 10 26 10 20C10 12 16 8 24 10Z" fill={color} />
    <circle cx="34.500" cy="7.500" r="5.500" fill={color} />
  </svg>
);
const AiFav = () => <div className="flex h-5 w-5 items-center justify-center bg-[#243133]"><Ai className="h-[15px] w-[15px]" color="#ffffff" /></div>;
const GoogleFav = () => (
  <svg viewBox="0 0 20 20" className="h-5 w-5"><circle cx="10" cy="10" r="10" fill="#fff" /><g fill="none" strokeWidth="2.600"><path d="M5 7A6 6 0 0 1 14.500 6" stroke="#ea4335" /><path d="M5 7A6 6 0 0 0 5 13" stroke="#fbbc05" /><path d="M5 13A6 6 0 0 0 14 14.500" stroke="#34a853" /><path d="M10 10H15.500A6 6 0 0 1 14 14.500" stroke="#4285f4" /></g></svg>
);
const TABS = [
  [LoopFav, "SWEDO Know"], [LoopFav, "Iraq Challeng"], [DriveFav, "My Drive - Go"], [SheetFav, "Control Budg"],
  [SheetFav, "Indicators Pla"], [SheetFav, "SGCC Databa"], [AiFav, "Add record", true],
  [() => <Firefox className="h-5 w-5" />, "Logins & Pass"], [() => <PowerBI className="h-5 w-5" />, "Outreach - Po"],
  [null, "localhost/activity"], [GoogleFav, "unhcr jobs ira"],
];

function TabStrip() {
  return (
    <div className="flex h-[55px] items-center bg-[#1c1b22] text-[15px] text-[#fbfbfe]">
      <Firefox className="ml-[14px] h-[21px] w-[22px] shrink-0" />
      <div className="ml-[17px] h-full w-px shrink-0 bg-[#52515c]" />
      <div className="ml-[5px] flex h-full">
        {TABS.map(([I, t, active]) => (
          <div key={t} className="flex w-[140.25px] shrink-0 items-center">
            <div className={"flex h-[45px] w-[136px] items-center rounded-[5px] pl-[10px] " + (active ? "bg-[#42414d]" : "")}>
              {I ? <I /> : null}
              <T className={"[mask-image:linear-gradient(to_right,black_65%,transparent_100%)] " + (active ? "ml-[7px] w-[71px]" : I ? "ml-[7px] w-[87px]" : "w-[114px]")}>{t}</T>
              {active ? <Ic className="ml-[2px] h-[11px] w-[11px]" box="0 0 11 11" sw={1.3} d="M0.500 0.500L10.500 10.500M10.500 0.500L0.500 10.500" /> : null}
            </div>
          </div>
        ))}
      </div>
      <Ic className="ml-[13px] h-4 w-4" sw={1.4} d="M0 8H16M8 0V16" />
      <Ic className="ml-[35px] h-[9px] w-[15px]" box="0 0 15 9" sw={1.5} d="M0.500 1L7.500 8L14.500 1" />
      <div className="ml-[91px] h-px w-3 bg-white" />
      <Ic className="ml-[45px] h-3 w-3" box="0 0 12 12" sw={1.1} d="M0.500 3.500H8.500V11.500H0.500ZM3.500 3.500V0.500H11.500V8.500H8.500" />
      <Ic className="ml-11 h-3 w-[13px]" box="0 0 12 12" sw={1.1} d="M0 0L12 12M12 0L0 12" />
    </div>
  );
}

function Toolbar() {
  return (
    <div className="flex h-[51px] items-center border-b border-[#0c0c0d] bg-[#2b2a33] text-[#fbfbfe]">
      <Ic className="ml-[21px] h-[14px] w-[18px]" box="0 0 18 14" sw={1.7} d="M18 7H1.500M7.500 1L1.500 7L7.500 13" />
      <Ic className="ml-[27px] h-[14px] w-[18px] text-[#76757e]" box="0 0 18 14" sw={1.7} d="M0 7H16.500M10.500 1L16.500 7L10.500 13" />
      <Ic className="ml-[26px] h-[18px] w-5" box="0 0 20 18" sw={1.7} d="M16 4C12 -0.500 2 1 2 9C2 18 16 19 18 10M18 0.500V6H12" />
      <div className="ml-[159px] flex h-10 w-[1252px] shrink-0 items-center rounded-[5px] bg-[#1c1b22]">
        <Ic className="ml-[11px] h-5 w-[18px]" box="0 0 18 20" sw={1.6} d="M9 1L16.500 4C17 11 15 16 9 19C3 16 1 11 1.500 4Z" />
        <Ic className="ml-[18px] h-5 w-4" box="0 0 16 20" sw={1.6} d="M3 9H13Q15 9 15 11V17Q15 19 13 19H3Q1 19 1 17V11Q1 9 3 9M4 9V5C4 0 12 0 12 5V9" />
        <T className="ml-[14px] w-[535px] text-[18px] text-[#9d9ca4]">https://www.<span className="text-[#fbfbfe]">activityinfo.org</span>/app#form/coo5otwkx4of0po6/newRecord</T>
        <Ic className="ml-[611px] h-5 w-5" box="0 0 20 20" sw={1.6} d="M10 1L12.700 7H19L14 11.500L16 19L10 14.500L4 19L6 11.500L1 7H7.300Z" />
      </div>
      <Ic className="ml-[160px] h-4 w-[18px]" box="0 0 18 16" sw={1.7} d="M2.500 1H15.500Q17 1 17 2.500V7C17 18 1 18 1 7V2.500Q1 1 2.500 1M5 6L9 10L13 6" />
      <Ic className="ml-[27px] h-[18px] w-[18px]" box="0 0 18 18" sw={1.6} d="M9 0V12M4 7.500L9 12.500L14 7.500M1 13V15.500Q1 17 2.500 17H15.500Q17 17 17 15.500V13" />
      <div className="ml-[26px] flex h-5 w-5 shrink-0 items-center justify-center rounded-full bg-white text-[13px] font-bold text-[#2b2a33]">A</div>
      <div className="ml-[25px] flex h-5 w-5 shrink-0 items-center justify-center rounded-full bg-[#15c39a] text-[14px] font-semibold text-white">G</div>
      <Ic className="ml-[27px] h-[13px] w-4" box="0 0 16 13" sw={1.5} d="M0 1H16M0 6.500H16M0 12H16" />
    </div>
  );
}

function AppHeader() {
  return (
    <div className="relative flex h-[91px] items-center bg-white">
      <Ai className="-mt-[10px] ml-[25px] h-10 w-10 shrink-0" color="#06cfa0" />
      <div className="ml-[25px] flex h-[45px] w-[170px] shrink-0 items-center bg-[#e1f9fb] text-[25px] font-semibold text-[#243133]"><T className="ml-3 w-[145px]">ActivityInfo</T></div>
      <div className="ml-[50px] flex h-[70px] w-[1022px] shrink-0 items-center text-[#243133] shadow-[0_0_10px_rgba(36,49,51,0.14)]">
        <Ic className="ml-[17px] h-[21px] w-[21px]" box="0 0 21 21" sw={2.6}><circle cx="9" cy="9" r="7" /><path d="M14 14L20 20" /></Ic>
        <T className="ml-[23px] w-[374px] text-[22px] text-[#3e4a4c]">Search for a database, folder or form...</T>
      </div>
      <div className="ml-[74px] flex h-full shrink-0 flex-col items-center text-[17px] leading-6 text-[#828c8e]">
        <Ic className="mt-5 h-5 w-[18px]" box="0 0 18 20" sw={1.4} d="M1 4C1 0 17 0 17 4V16C17 20 1 20 1 16ZM1 5C3 8 15 8 17 5M1 10C3 13 15 13 17 10M1 14C3 17 15 17 17 14" />
        <T className="mt-[6px] w-[82px]">Databases</T>
      </div>
      <div className="ml-[46px] flex h-full shrink-0 flex-col items-center text-[17px] leading-6 text-[#828c8e]">
        <Ic className="mt-5 h-5 w-[21px]" box="0 0 21 20"><path d="M0 19H21" strokeWidth="1.600" /><path d="M5 15V8M10.500 15V0M16 15V5" strokeWidth="3" /></Ic>
        <T className="mt-[6px] w-[86px]">My reports</T>
      </div>
      <div className="ml-[27px] flex h-full shrink-0 flex-col items-center text-[17px] leading-6 text-[#828c8e]">
        <Ic className="mt-5 h-5 w-6" box="0 0 24 20" sw={1.6} d="M12 3C9 1 5 1 1 1V17C5 17 9 17 12 19C15 17 19 17 23 17V1C19 1 15 1 12 3V19" />
        <T className="mt-[6px] w-[123px]">Documentation</T>
      </div>
      <div className="-mt-2 ml-[7px] flex h-20 w-20 shrink-0 items-center justify-center rounded-full bg-[#f0f6f6] text-[27px] text-[#cfe3dc]">A</div>
      <svg viewBox="0 0 15 10" className="-mt-2 ml-[7px] h-[10px] w-[15px] shrink-0" fill="#243133"><path d="M0 0H15L7.500 10Z" /></svg>
    </div>
  );
}

const CRUMBS = [["DATABASES", "w-[94px]"], ["2022: IRAQ IDP", "w-[122px]"], ["PROTECTION", "w-[109px]"], ["GP RESPONSE", "w-[114px]"], ["ADD RECORD", "w-[110px]"]];

function PageHeader() {
  return (
    <div className="flex h-[120px] items-center bg-white text-[#243133]">
      <div className="ml-5 flex h-20 w-20 shrink-0 items-center justify-center rounded-full bg-[#f0f6f7]">
        <svg viewBox="0 0 30 36" className="-mt-[2px] h-9 w-[30px]">
          <path d="M0 24V31C0 38 30 38 30 31V24Z" fill="#0f3a94" /><path d="M0 15V23C0 29 30 29 30 23V15Z" fill="#0b55d0" />
          <path d="M0 6V14C0 20 30 20 30 14V6Z" fill="#6295e8" /><ellipse cx="15" cy="5.500" rx="15" ry="5" fill="#b0ccfa" />
        </svg>
      </div>
      <div className="mb-[7px] ml-[21px]">
        <div className="flex h-6 items-center text-[16px] font-semibold text-[#6b8c8f]">
          {CRUMBS.map(([t, w], i) => (
            <React.Fragment key={t}>
              {i > 0 ? <Ic className="mx-[12.500px] h-[11px] w-[6px]" box="0 0 6 11" sw={1.4} d="M1 0.500L5 5.500L1 10.500" /> : null}
              <T className={w + (i === 4 ? " text-[#9fb9ba]" : "")}>{t}</T>
            </React.Fragment>
          ))}
        </div>
        <div className="h-[30px] text-[26px] font-semibold leading-[30px]"><T className="w-[327px]">Add record in GP Response</T></div>
      </div>
      <div className="mb-[12px] ml-auto flex items-center text-[18px] font-semibold">
        <svg viewBox="0 0 20 20" className="h-5 w-5"><circle cx="10" cy="10" r="10" fill="#243133" /><path d="M6.500 6.500L13.500 13.500M13.500 6.500L6.500 13.500" stroke="#fff" strokeWidth="3" /></svg>
        <T className="ml-[10px] w-[54px]">Cancel</T>
        <div className="mb-3 ml-[27px] mr-[25px] mt-[13px] flex h-[58px] w-[157px] items-center rounded-[4px] border border-[#0bd283] bg-[#91f3ca] shadow-[0_2px_12px_rgba(3,208,126,0.6)]">
          <svg viewBox="0 0 20 20" className="ml-[14px] h-5 w-5"><circle cx="10" cy="10" r="10" fill="#243133" /><path d="M5 10L9 14L15 6.500" stroke="#fff" strokeWidth="2.800" fill="none" /></svg>
          <T className="ml-[10px] w-[94px]">Save record</T>
        </div>
      </div>
    </div>
  );
}

const Required = () => <div className="flex h-8 w-[77px] items-center justify-center rounded-[3px] border border-white text-[13px] font-semibold"><T className="w-[65px]">REQUIRED</T></div>;
const Tri = ({ className = "" }) => <svg viewBox="0 0 15 10" className={"h-[10px] w-[15px] " + className} fill="#000"><path d="M0 0H15L7.500 10Z" /></svg>;

function RecordForm() {
  return (
    <div className="flex h-[693px] overflow-hidden bg-[#243133] text-white">
      <div className="ml-[550px] w-[800px] shrink-0 font-semibold">
        <div className="mt-[55px] flex h-[46px] items-center text-[35px]"><T className="w-[177px]">Add record</T></div>
        <div className="mt-[9px] flex h-[59px] items-center bg-[#d3023d] pb-[2px] pl-[14px] text-[20px]"><T className="w-[271px]">There is an error in this form.</T></div>
        <div className="mt-[35px] h-[520px] bg-[#364a4d] px-[50px] pt-10 text-[20px]">
          <div className="flex h-8 justify-between"><T className="w-[77px] leading-[20px]">Partner*</T><Required /></div>
          <div className="mx-px mt-[11px] flex h-[66px] items-center justify-between rounded-[4px] bg-white pl-[19px] pr-[23px] text-[17px] font-normal text-[#3e4a4c]"><T className="w-[61px]">SWEDO</T><Tri /></div>
          <div className="mt-[41px] flex h-8 justify-between"><T className="w-[99px] leading-[20px]">Plan Code*</T><Required /></div>
          <div className="mt-[9px] h-[52px] rounded-[3px] border border-white" />
          <div className="mt-10 flex h-8 justify-between"><T className="w-[87px] leading-[20px]">Location*</T><Required /></div>
          <div className="mt-[10px] h-[200px] rounded-[3px] border border-white px-[26px] pt-[25px]">
            <T className="-ml-px w-[102px] text-[17.500px] leading-6 text-[#c8e3d9]">Governorate</T>
            <div className="mt-[13px] flex h-[66px] items-center justify-between rounded-[4px] bg-white pb-[2px] pl-5 pr-[23px] text-[17px] font-normal text-[#3e4a4c]"><T className="w-[50px]">Duhok</T><Tri /></div>
          </div>
        </div>
      </div>
      <div className="ml-auto flex w-[21px] flex-col items-center bg-[#1c2729]">
        <svg viewBox="0 0 9 6" className="mt-[7px] h-[6px] w-[9px]" fill="#7d8688"><path d="M0 6L4.500 0L9 6Z" /></svg>
        <div className="mt-[7px] h-[238px] w-[21px] bg-[#616a6c]" />
        <svg viewBox="0 0 9 6" className="mb-[5px] mt-auto h-[6px] w-[9px]" fill="#7d8688"><path d="M0 0L4.500 6L9 0Z" /></svg>
      </div>
    </div>
  );
}

const Bear = () => (
  <svg viewBox="0 0 100 50" className="ml-auto h-[50px] w-[100px] shrink-0" preserveAspectRatio="none">
    <path d="M0 50C2 36 10 28 30 24C60 18 80 16 100 16V50Z" fill="#56cfe1" /><path d="M60 18H100V50H50Z" fill="#2ba9c9" />
    <ellipse cx="60" cy="40" rx="40" ry="9" fill="#bfe6f7" /><ellipse cx="60" cy="38" rx="38" ry="7" fill="#e6f6fd" />
    <path d="M36 14C48 4 78 4 88 16C96 24 98 36 92 38C82 44 50 42 34 37C26 34 28 24 36 14Z" fill="#d8cce2" />
    <path d="M52 40C60 26 76 26 80 40Z" fill="#b5a2c8" />
    <circle cx="20" cy="9" r="4" fill="#cbbcd8" /><circle cx="39" cy="7" r="4" fill="#cbbcd8" />
    <ellipse cx="29" cy="16" rx="13" ry="11" fill="#e7dfee" /><ellipse cx="29" cy="22" rx="5" ry="4" fill="#f4f0f8" />
    <circle cx="24" cy="15" r="1.300" fill="#2d2233" /><circle cx="34" cy="14" r="1.300" fill="#2d2233" /><ellipse cx="30" cy="21" rx="3" ry="2" fill="#2d2233" />
    <ellipse cx="26" cy="35" rx="9" ry="4" fill="#e7dfee" /><ellipse cx="78" cy="39" rx="8" ry="4" fill="#e7dfee" />
    <path d="M7 2L9 5L12 6L9 8L7 11L5 8L2 6L5 5Z" fill="#c66cf0" /><circle cx="92" cy="7" r="2.800" fill="#f6a90f" /><circle cx="4" cy="15" r="2" fill="#56cfe1" />
  </svg>
);

function RightTaskbar() {
  return (
    <div className="flex h-[50px] bg-[linear-gradient(90deg,#22393f_0%,#21363f_45%,#1c2c40_75%,#1b2540_100%)] text-white">
      <div className="flex w-[60px] items-center justify-center"><WinIc className="h-5 w-5" /></div>
      <div className="flex h-[50px] w-[430px] items-center border border-r-0 border-[#c0c0c0] bg-[#f2f2f2] text-[#222222]">
        <SearchIc className="ml-[14px] h-5 w-[21px]" />
        <T className="ml-[14px] w-[163px] text-[18.500px]">Type here to search</T>
        <Bear />
      </div>
      <div className="flex w-[60px] items-center justify-center"><div className="h-5 w-5 rounded-full border-[2.500px] border-white" /></div>
      <div className="flex w-[60px] items-center justify-center"><TaskViewIc className="h-5 w-5" /></div>
      <div className="ml-[3px] flex">
        {APPS.map(({ I, on, focus }, i) => (
          <div key={i} className={"relative flex w-[62px] items-center justify-center " + (focus ? "bg-[#4d5d64]" : "")}>
            <I className="h-[30px] w-[30px]" />
            {on ? <div className="absolute bottom-0 left-[6px] h-[3px] w-[51px] bg-[#76b9ed]" /> : null}
            {focus ? <div className="absolute bottom-0 left-0 h-[3px] w-[62px] bg-[#76b9ed]" /> : null}
          </div>
        ))}
      </div>
      <div className="ml-[186px] flex items-center">
        <div className="h-[26px] w-[26px] rounded-full bg-[linear-gradient(135deg,#f9c33a,#ee7a16)]" />
        <T className="ml-3 w-[94px] text-[18px]">78°F  Sunny</T>
        <Ic className="ml-[31px] h-[9px] w-4" box="0 0 16 9" sw={1.4} d="M0.500 8.500L8 1L15.500 8.500" />
        <Ic className="ml-4 h-[18px] w-[14px]" box="0 0 14 18" sw={1.3} d="M2 5H9V13H2ZM9 8L13 6V12L9 10M2 3C4 0 8 0 10 2M2 15C4 18 8 18 10 16" />
        <svg viewBox="0 0 20 16" className="ml-3 h-4 w-5"><rect x="6" y="4" width="12" height="9" fill="#fff" /><path d="M3.500 2.500H19.500V14.500H3.500ZM1 0V4H5V0M3 4V8" fill="none" stroke="#fff" strokeWidth="1.300" /></svg>
        <Ic className="ml-[13px] h-4 w-4" sw={1.4} d="M1 16C1 7 7 1 16 1M5 16C5 10 10 5 16 5M9 16C9 12 12 9 16 9M13 16C13 14 14 13 16 13" />
        <Ic className="ml-[11px] h-[15px] w-5" box="0 0 20 15" sw={1.3} d="M1 5H4L8 1V14L4 10H1ZM11 5C12 6 12 9 11 10M14 3C16 5 16 10 14 12M17 1C20 4 20 11 17 14" />
      </div>
      <div className="ml-4 flex w-[23px] flex-col items-center text-[14.500px] leading-[21px]">
        <div className="mt-[3px] h-[21px] font-['DejaVu_Sans',sans-serif]">ع</div>
        <T className="mt-[3px] w-[23px]">101</T>
      </div>
      <div className="ml-[15px] flex w-[76px] flex-col items-center pt-[3px] text-[15px] leading-[22px]">
        <T className="w-[51px]">1:46 PM</T>
        <T className="mt-px w-[76px]">10/30/2022</T>
      </div>
      <div className="relative ml-[19px] w-[46px] border-r border-[#6b7a86]">
        <svg viewBox="0 0 20 20" className="mt-[15px] h-5 w-5"><path d="M0 0H20V16H7L3 20V16H0Z" fill="#fff" /><path d="M3 4.500H17M3 8H17M3 11.500H12" stroke="#1b2640" strokeWidth="1.300" /></svg>
        <div className="absolute left-[9px] top-[24px] flex h-5 w-5 items-center justify-center rounded-full border border-[#9aa3ac] bg-[#23272e] text-[13px] font-semibold">7</div>
      </div>
    </div>
  );
}

function BrowserWindow() {
  return (
    <div className="flex h-[1080px] w-[1920px] shrink-0 flex-col overflow-hidden bg-white font-['Open_Sans',sans-serif]">
      <TabStrip />
      <Toolbar />
      <div>
        <AppHeader />
        <div className="h-5 bg-[linear-gradient(180deg,rgba(60,100,90,0.55)_0%,rgba(60,100,90,0)_75%),linear-gradient(92deg,#03d192_0%,#04cfb4_40%,#04cdc8_100%)]" />
        <PageHeader />
        <RecordForm />
      </div>
      <RightTaskbar />
    </div>
  );
}

export default function App() {
  return (
    <div className="flex h-[1080px] w-[3840px] overflow-hidden">
      <OutlookWindow />
      <BrowserWindow />
    </div>
  );
}
